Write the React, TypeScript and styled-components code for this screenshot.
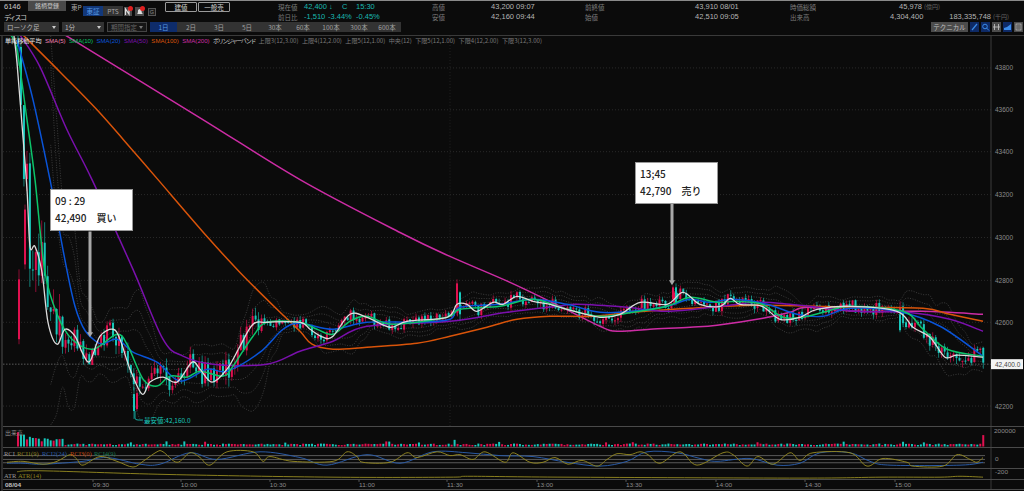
import React from "react";
import styled, { createGlobalStyle } from "styled-components";

type Pt = [number, number];

const GlobalStyle = createGlobalStyle`
    html, body { margin: 0; padding: 0; background: #0b0b0b; }
    body { font-family: "Noto Sans CJK JP", "Liberation Sans", sans-serif; }
`;

const C = {
    sma5: "#dcdcdc",
    sma10: "#0cc46a",
    sma20: "#0a54d8",
    sma50: "#7a10ac",
    sma100: "#d9540a",
    sma200: "#cc2ca4",
    up: "#e0104f",
    down: "#18c8bc",
    gold: "#8f8420",
    rciBlue: "#2a5ca8",
};

// hand-read from the chart, in page pixels
const SMA5: Pt[] = [[14, 36], [17, 63], [22, 125], [27, 190], [30, 247], [35, 247], [42, 273], [48, 323], [57, 345], [65, 330], [75, 337], [83, 355], [90, 362], [100, 337], [113, 330], [120, 340], [130, 370], [142, 395], [150, 383], [163, 378], [177, 383], [192, 363], [200, 370], [212, 383], [227, 370], [240, 347], [253, 325], [267, 323], [300, 323], [310, 330], [323, 338], [333, 337], [350, 315], [367, 318], [390, 328], [407, 322], [447, 318], [457, 305], [467, 305], [477, 312], [493, 303], [503, 305], [517, 297], [533, 302], [550, 305], [567, 310], [600, 318], [620, 315], [640, 303], [667, 305], [683, 293], [700, 305], [720, 307], [730, 299], [740, 305], [762, 307], [780, 320], [800, 318], [817, 310], [850, 307], [897, 312], [913, 328], [930, 338], [945, 358], [957, 356], [983, 358]];
const SMA10: Pt[] = [[10, 34], [17, 50], [27, 120], [35, 180], [45, 273], [58, 317], [72, 340], [93, 350], [117, 335], [128, 347], [143, 380], [157, 387], [170, 377], [187, 378], [200, 372], [223, 377], [233, 367], [253, 337], [267, 323], [300, 323], [317, 330], [333, 335], [350, 322], [367, 317], [393, 325], [447, 318], [460, 310], [500, 307], [533, 300], [567, 310], [600, 317], [633, 313], [667, 307], [690, 298], [717, 303], [737, 302], [762, 305], [783, 318], [803, 318], [827, 312], [850, 307], [903, 312], [923, 330], [947, 350], [983, 357]];
const SMA20: Pt[] = [[17, 40], [33, 100], [50, 180], [75, 307], [97, 343], [117, 340], [133, 353], [157, 363], [180, 382], [207, 370], [227, 372], [260, 353], [283, 330], [300, 324], [333, 330], [367, 323], [417, 323], [450, 320], [460, 308], [500, 305], [533, 300], [567, 305], [600, 313], [633, 312], [667, 307], [690, 300], [710, 303], [733, 300], [767, 305], [797, 315], [823, 317], [850, 309], [897, 312], [940, 327], [983, 357]];
const SMA50: Pt[] = [[20, 35], [40, 67], [67, 130], [92, 180], [133, 270], [163, 340], [183, 357], [213, 365], [267, 365], [300, 352], [333, 342], [367, 327], [450, 322], [507, 313], [557, 307], [577, 305], [627, 308], [667, 312], [720, 307], [757, 303], [790, 305], [857, 312], [907, 313], [950, 320], [983, 332]];
const SMA100: Pt[] = [[23, 35], [60, 72], [97, 110], [133, 151], [158, 180], [207, 237], [240, 273], [277, 310], [300, 332], [312, 345], [333, 350], [367, 348], [417, 344], [450, 337], [487, 328], [517, 320], [550, 317], [593, 317], [633, 313], [690, 309], [757, 306], [857, 308], [923, 309], [950, 315], [983, 322]];
const SMA200: Pt[] = [[65, 35], [200, 118], [300, 180], [400, 233], [450, 257], [510, 283], [560, 307], [600, 327], [617, 332], [650, 330], [690, 328], [717, 326], [763, 319], [790, 313], [807, 308], [857, 312], [923, 312], [983, 315]];

const RCI_GOLD: Pt[] = [[7, 463], [23, 462], [43, 465], [57, 462], [70, 455], [77, 460], [83, 466], [100, 457], [117, 462], [133, 468], [143, 462], [157, 452], [163, 452], [177, 463], [190, 453], [200, 458], [210, 466], [227, 452], [253, 452], [263, 462], [270, 457], [293, 462], [333, 462], [347, 452], [357, 457], [363, 463], [390, 463], [407, 453], [417, 458], [437, 452], [450, 456], [460, 455], [473, 460], [485, 452], [505, 463], [513, 453], [530, 463], [543, 463], [555, 458], [568, 465], [582, 461], [597, 467], [607, 460], [617, 454], [630, 455], [640, 452], [648, 455], [660, 464], [680, 452], [697, 466], [723, 453], [733, 455], [747, 467], [758, 457], [773, 465], [790, 453], [800, 461], [813, 453], [850, 453], [867, 467], [883, 459], [907, 463], [913, 467], [943, 467], [957, 455], [970, 460], [977, 463], [983, 458]];
const RCI_BLUE: Pt[] = [[7, 464], [23, 464], [43, 465], [83, 462], [107, 458], [140, 465], [160, 465], [190, 453], [217, 460], [260, 452], [300, 458], [327, 466], [367, 455], [400, 464], [433, 452], [467, 453], [500, 456], [533, 457], [567, 463], [600, 467], [627, 462], [647, 452], [677, 453], [700, 459], [717, 462], [750, 459], [777, 466], [800, 464], [820, 453], [850, 453], [870, 462], [890, 466], [960, 466], [983, 463]];
const ATR_LINE: Pt[] = [[17, 472], [43, 471], [167, 475], [333, 478], [450, 478], [470, 477], [567, 478], [800, 479], [880, 478], [940, 478], [960, 477], [983, 478]];

const PRICE_TICKS: [string, number][] = [["43800", 68], ["43600", 110], ["43400", 152], ["43200", 195], ["43000", 238], ["42800", 281], ["42600", 323], ["42200", 407]];
const TIME_TICKS: [string, number][] = [["09:30", 101], ["10:00", 189], ["10:30", 278], ["11:00", 367], ["11:30", 455], ["13:00", 545], ["13:30", 634], ["14:00", 724], ["14:30", 813], ["15:00", 903]];

const STEP = 2.97;
const X0 = 18;
const COUNT = 326;

const rand = (() => {
    let s = 6146;
    return () => {
        s = (s * 16807) % 2147483647;
        return s / 2147483647;
    };
})();

const at = (line: Pt[], x: number) => {
    if (x <= line[0][0]) return line[0][1];
    for (let i = 1; i < line.length; i++) {
        if (x <= line[i][0]) {
            const [x0, y0] = line[i - 1];
            const [x1, y1] = line[i];
            return y0 + ((y1 - y0) * (x - x0)) / (x1 - x0);
        }
    }
    return line[line.length - 1][1];
};

// catmull-rom through the points, so the averages come out rounded
const smooth = (p: Pt[]) => {
    let d = `M${p[0][0]} ${p[0][1]}`;
    for (let i = 0; i < p.length - 1; i++) {
        const a = p[Math.max(i - 1, 0)];
        const b = p[i];
        const c = p[i + 1];
        const e = p[Math.min(i + 2, p.length - 1)];
        const c1 = [b[0] + (c[0] - a[0]) / 6, b[1] + (c[1] - a[1]) / 6];
        const c2 = [c[0] - (e[0] - b[0]) / 6, c[1] - (e[1] - b[1]) / 6];
        d += `C${c1[0].toFixed(1)} ${c1[1].toFixed(1)} ${c2[0].toFixed(1)} ${c2[1].toFixed(1)} ${c[0]} ${c[1]}`;
    }
    return d;
};

interface Candle {
    x: number;
    open: number;
    close: number;
    high: number;
    low: number;
}

const candles: Candle[] = [];
{
    let prev = 40;
    for (let i = 0; i < COUNT; i++) {
        const x = X0 + i * STEP;
        const amp = x < 60 ? 32 : x < 260 ? 13 : x > 900 ? 9 : 6.5;
        const close = at(SMA5, x) + (rand() - 0.5) * amp * 2;
        const open = prev + (rand() - 0.5) * 2;
        const high = Math.min(open, close) - rand() * amp * 0.7;
        const low = Math.max(open, close) + rand() * amp * 0.7;
        candles.push({ x, open, close, high, low });
        prev = close;
    }
}

const EXTRA: Candle[] = [
    { x: 19, open: 340, close: 280, high: 270, low: 345 },
    { x: 25, open: 265, close: 210, high: 205, low: 270 },
    { x: 134, open: 395, close: 412, high: 388, low: 420 },
    { x: 137, open: 410, close: 394, high: 388, low: 412 },
    { x: 457, open: 313, close: 284, high: 280, low: 316 },
    { x: 460, open: 293, close: 315, high: 292, low: 322 },
    { x: 673, open: 300, close: 288, high: 286, low: 302 },
    { x: 676, open: 288, close: 303, high: 284, low: 306 },
    { x: 900, open: 315, close: 331, high: 313, low: 333 },
];

// bollinger bands, worked out from the generated closes
const bands = (() => {
    const out: Pt[][] = [[], [], [], [], [], []];
    const ks = [-3, -2, -1, 1, 2, 3];
    for (let i = 11; i < COUNT; i += 2) {
        const w = candles.slice(i - 11, i + 1).map((c) => c.close);
        const mean = w.reduce((a, b) => a + b, 0) / 12;
        const sd = Math.sqrt(w.reduce((a, b) => a + (b - mean) ** 2, 0) / 12);
        ks.forEach((k, n) => {
            const y = Math.max(36, Math.min(426, mean + k * sd));
            out[n].push([Number(candles[i].x.toFixed(1)), Number(y.toFixed(1))]);
        });
    }
    return out;
})();

const volumes = candles.map((c, i) => {
    const base = i < 4 ? 15 - i * 2.5 : i < 16 ? 5 + rand() * 4 : 1.5 + rand() * 1.6;
    const spike = rand() > 0.96 ? 2.5 : 0;
    return { x: c.x, h: base + spike, up: c.close < c.open };
});
volumes[0].up = true;
volumes[1].up = false;
volumes[Math.round((903 - X0) / STEP)].h = 5;
volumes[Math.round((456 - X0) / STEP)].h = 7;
volumes[Math.round((983 - X0) / STEP)].h = 12;
volumes[Math.round((983 - X0) / STEP)].up = true;

const Window = styled.div`
    width: 1024px;
    height: 491px;
    overflow: hidden;
    background: #0b0b0b;
    color: #a8a8a8;
    font-size: 7px;
    line-height: 10px;
    white-space: nowrap;
    border-top: 1px solid #8a8a8a;
    box-sizing: border-box;
    display: flex;
    flex-direction: column;
`;

const Head = styled.header`
    height: 20px;
    padding-left: 4px;
    display: flex;
    align-items: flex-start;
    flex-shrink: 0;
`;

const Identity = styled.div`
    width: 67px;
    flex-shrink: 0;
    display: grid;
    grid-template-columns: 24px 38px;
    grid-auto-rows: 10px;
    padding-top: 1px;
    color: #c8c8c8;
`;

const Ticker = styled.span`
    font-family: "Liberation Sans", sans-serif;
    font-size: 7.5px;
`;

const Company = styled.span`
    grid-column: span 2;
    font-size: 7px;
    letter-spacing: -1.5px;
`;

const RegisterButton = styled.span`
    background: #4a4a4a;
    color: #c4c4c4;
    text-align: center;
    font-size: 6px;
    height: 10px;
    margin-top: -1px;
`;

const Market = styled.span`
    width: 12px;
    flex-shrink: 0;
    padding-top: 1px;
    font-size: 6.5px;
`;

const Segment = styled.div`
    display: flex;
    margin-top: 5px;
    height: 10px;
    flex-shrink: 0;
`;

const SegmentItem = styled.span<{ $on?: boolean }>`
    width: 20px;
    text-align: center;
    font-size: 6.5px;
    background: ${({ $on }) => ($on ? "#12387a" : "#333")};
    color: ${({ $on }) => ($on ? "#5a9ae0" : "#a8a8a8")};
`;

const FlagRow = styled.div`
    display: flex;
    align-items: center;
    gap: 2px;
    margin: 5px 0 0 1px;
    height: 10px;
    width: 41px;
    flex-shrink: 0;
`;

const TradeButton = styled.span`
    width: 32px;
    height: 10px;
    box-sizing: border-box;
    line-height: 8px;
    border: 1px solid #9a9a9a;
    border-radius: 1px;
    color: #d0d0d0;
    font-size: 6.5px;
    text-align: center;
    margin: 1px 1px 0 0;
    flex-shrink: 0;
`;

const QuoteGroup = styled.div<{ $cols: string; $width: number; $offset?: number }>`
    display: grid;
    width: ${({ $width }) => $width}px;
    margin-left: ${({ $offset }) => $offset || 0}px;
    grid-template-columns: ${({ $cols }) => $cols};
    grid-auto-rows: 10px;
    padding-top: 1px;
    flex-shrink: 0;
`;

const Label = styled.span`
    color: #7c7c7c;
    font-size: 6.5px;
`;

const Value = styled.span<{ $teal?: boolean; $right?: boolean; $span?: number }>`
    color: ${({ $teal }) => ($teal ? "#19b8b0" : "#b4b4b4")};
    text-align: ${({ $right }) => ($right ? "right" : "left")};
    grid-column: span ${({ $span }) => $span || 1};
    font-family: "Liberation Sans", sans-serif;
    font-size: 7.5px;
`;

const Clock = styled(Value)`
    padding-left: 2px;
`;

const Unit = styled.span`
    color: #666;
    font-size: 6px;
    padding-left: 2px;
`;

const Toolbar = styled.div`
    height: 15px;
    box-sizing: border-box;
    padding: 1px 0 0 4px;
    display: flex;
    align-items: flex-start;
    border-bottom: 1px solid #3a3a3a;
    flex-shrink: 0;
`;

const Select = styled.span<{ $width: number; $off?: boolean }>`
    width: ${({ $width }) => $width}px;
    height: 10px;
    box-sizing: border-box;
    margin-right: 3px;
    padding: 0 3px;
    display: flex;
    justify-content: space-between;
    align-items: center;
    flex-shrink: 0;
    font-size: 6.5px;
    background: ${({ $off }) => ($off ? "#161616" : "#333")};
    border: ${({ $off }) => ($off ? "1px solid #444" : "none")};
    color: ${({ $off }) => ($off ? "#666" : "#b8b8b8")};

    &::after {
        content: "";
        border: 2.5px solid transparent;
        border-top: 3px solid ${({ $off }) => ($off ? "#777" : "#ccc")};
        border-bottom: 0;
    }
`;

const Range = styled.div`
    display: flex;
    width: 251px;
    height: 10px;
    background: #333;
`;

const RangeTab = styled.span<{ $on?: boolean; $width: number }>`
    width: ${({ $width }) => $width}px;
    text-align: center;
    font-size: 6.5px;
    background: ${({ $on }) => ($on ? "#0e2c6a" : "transparent")};
    color: ${({ $on }) => ($on ? "#5a9ae0" : "#a0a0a0")};
`;

const ToolGroup = styled.div`
    margin-left: auto;
    display: flex;
    gap: 2px;
    padding-right: 1px;
`;

const TechButton = styled.span`
    width: 37px;
    height: 10px;
    background: #4c4c4c;
    color: #c0c0c0;
    font-size: 6.5px;
    text-align: center;
`;

const ToolIcon = styled.span<{ $blue?: boolean }>`
    width: 9px;
    height: 10px;
    display: flex;
    background: ${({ $blue }) => ($blue ? "#0e2a66" : "#4c4c4c")};

    svg {
        width: 9px;
        height: 10px;
    }
`;

const Chart = styled.main`
    flex: 1;
    display: flex;
    flex-direction: column;
    border-left: 2px solid #2c2c2c;
    margin-left: 1px;
    min-height: 0;
`;

const Pane = styled.section<{ $height: number }>`
    position: relative;
    height: ${({ $height }) => $height}px;
    flex-shrink: 0;
    border-bottom: 1px solid #4a4a4a;
    box-sizing: border-box;
`;

const PaneDrawing = styled.svg`
    display: block;
    width: 100%;
    height: 100%;
`;

const Legend = styled.div`
    position: absolute;
    left: 2px;
    top: 0;
    display: flex;
    gap: 3.4px;
    font-size: 6.2px;
    line-height: 10px;
`;

const LegendItem = styled.span<{ $color?: string; $sma?: boolean; $tight?: boolean }>`
    color: ${({ $color }) => $color || "#7a7a7a"};
    font-family: ${({ $sma }) => ($sma ? '"Liberation Sans", sans-serif' : "inherit")};
    font-size: 6.1px;
    letter-spacing: ${({ $tight }) => ($tight ? "-1.4px" : "0")};
`;

const Callout = styled.div<{ $left: number; $top: number }>`
    position: absolute;
    left: ${({ $left }) => $left}px;
    top: ${({ $top }) => $top}px;
    width: 83px;
    height: 42px;
    box-sizing: border-box;
    padding: 2px 4px;
    background: #fff;
    border: 1px solid #999;
    color: #222;
    font-size: 10px;
    font-weight: 500;
    line-height: 17px;
    white-space: pre;
`;

const axisText = { fill: "#8c8c8c", fontSize: 6.5, fontFamily: "'Liberation Sans', sans-serif" };
const paneLabel = { fontSize: 6.5, fontFamily: "'Liberation Serif', serif" };

const Line = ({ points, color, width = 1.5 }: { points: Pt[]; color: string; width?: number }) => (
    <path d={smooth(points)} fill="none" stroke={color} strokeWidth={width} strokeLinejoin="round" />
);

const CandleMark = ({ c }: { c: Candle }) => {
    const color = c.close < c.open ? C.up : C.down;
    const top = Math.min(c.open, c.close);
    const h = Math.max(Math.abs(c.open - c.close), 1);
    return (
        <g fill={color}>
            <rect x={c.x - 0.4} y={c.high} width={0.8} height={c.low - c.high} opacity={0.75} />
            <rect x={c.x - 1} y={top} width={2} height={h} />
        </g>
    );
};

const Arrow = ({ x, y1, y2 }: { x: number; y1: number; y2: number }) => (
    <g fill="#a8a8a8">
        <rect x={x - 1.5} y={y1} width={3} height={y2 - y1 - 4} />
        <path d={`M${x - 3} ${y2 - 5}L${x + 3} ${y2 - 5}L${x} ${y2}Z`} />
    </g>
);

const Frame = ({ top, height, children }: { top: number; height: number; children: React.ReactNode }) => (
    <PaneDrawing viewBox={`3 ${top} 1021 ${height}`} preserveAspectRatio="none">
        {children}
    </PaneDrawing>
);

const AxisLine = ({ top, height }: { top: number; height: number }) => (
    <line x1={991} x2={991} y1={top} y2={top + height} stroke="#3c3c3c" />
);

const MainPane = () => (
    <Pane $height={391}>
        <Frame top={36} height={391}>
            {PRICE_TICKS.map(([label, y]) => (
                <g key={label}>
                    <line x1={3} x2={991} y1={y} y2={y} stroke="#2a2a2a" strokeDasharray="1 2" />
                    <text x={995} y={y + 2.5} {...axisText}>
                        {label}
                    </text>
                </g>
            ))}
            <line x1={450} x2={450} y1={36} y2={427} stroke="#232323" strokeDasharray="1 2" />
            <line x1={3} x2={991} y1={365} y2={365} stroke="#5a5a5a" strokeDasharray="1.5 1.5" />
            {bands.map((b, i) => (
                <path key={i} d={smooth(b)} fill="none" stroke="#424242" strokeWidth={0.9} strokeDasharray="1 1.5" />
            ))}
            {candles.map((c, i) => (
                <CandleMark key={i} c={c} />
            ))}
            {EXTRA.map((c, i) => (
                <CandleMark key={i} c={c} />
            ))}
            <Line points={SMA200} color={C.sma200} />
            <Line points={SMA100} color={C.sma100} />
            <Line points={SMA50} color={C.sma50} />
            <Line points={SMA20} color={C.sma20} />
            <Line points={SMA10} color={C.sma10} />
            <Line points={SMA5} color={C.sma5} width={1.3} />
            <Arrow x={90} y1={232} y2={338} />
            <Arrow x={672} y1={204} y2={286} />
            <path d="M135 412V419Q135 421 138 421H143" fill="none" stroke={C.down} strokeWidth={0.8} />
            <text x={144} y={424} fill={C.down} fontSize={6.5} fontFamily="'Noto Sans CJK JP', sans-serif">
                最安値:42,160.0
            </text>
            <AxisLine top={36} height={391} />
            <rect x={991} y={360} width={32} height={10} fill="#f4f4f4" />
            <text x={995} y={367.5} {...axisText} fill="#444">
                42,400.0
            </text>
        </Frame>
        <Legend>
            <LegendItem $color="#e8e8e8">単純移動平均</LegendItem>
            <LegendItem $sma $color="#f080b0">SMA(5)</LegendItem>
            <LegendItem $sma $color={C.sma10}>SMA(10)</LegendItem>
            <LegendItem $sma $color={C.sma20}>SMA(20)</LegendItem>
            <LegendItem $sma $color={C.sma50}>SMA(50)</LegendItem>
            <LegendItem $sma $color={C.sma100}>SMA(100)</LegendItem>
            <LegendItem $sma $color={C.sma200}>SMA(200)</LegendItem>
            <LegendItem $tight $color="#c8c8c8">ボリンジャーバンド</LegendItem>
            <LegendItem>上限3(12,3.00)</LegendItem>
            <LegendItem>上限4(12,2.00)</LegendItem>
            <LegendItem>上限5(12,1.00)</LegendItem>
            <LegendItem>中央(12)</LegendItem>
            <LegendItem>下限5(12,1.00)</LegendItem>
            <LegendItem>下限4(12,2.00)</LegendItem>
            <LegendItem>下限3(12,3.00)</LegendItem>
        </Legend>
        <Callout $left={47} $top={153}>
            {"09 : 29\n42,490　買い"}
        </Callout>
        <Callout $left={632} $top={126}>
            {"13;45\n42,790　売り"}
        </Callout>
    </Pane>
);

const VolumePane = () => (
    <Pane $height={21}>
        <Frame top={427} height={21}>
            {volumes.map((v, i) => (
                <rect key={i} x={v.x - 1} y={447.5 - v.h} width={2} height={v.h} fill={v.up ? C.up : C.down} />
            ))}
            <AxisLine top={427} height={21} />
            <text x={994} y={433.5} {...axisText}>
                200000
            </text>
            <text x={5} y={435} fill="#8c8c8c" fontSize={6} fontFamily="'Noto Sans CJK JP', sans-serif">
                出来高
            </text>
        </Frame>
    </Pane>
);

const RciPane = () => (
    <Pane $height={21}>
        <Frame top={448} height={21}>
            {[456, 460, 463.5].map((y) => (
                <line key={y} x1={3} x2={985} y1={y} y2={y} stroke="#5c5c5c" />
            ))}
            <Line points={RCI_BLUE} color={C.rciBlue} width={1} />
            <Line points={RCI_GOLD} color={C.gold} width={1} />
            <AxisLine top={448} height={21} />
            <text x={995} y={462} {...axisText}>
                0
            </text>
            <g {...paneLabel}>
                <text x={4} y={456} fill="#9a9a9a">RCI</text>
                <text x={17} y={456} fill={C.gold}>RCI1(9)</text>
                <text x={42} y={456} fill={C.rciBlue}>RCI2(24)</text>
                <text x={70} y={456} fill="#c04a10">RCI3(0)</text>
                <text x={94} y={456} fill="#1a7a50">RCI4(9)</text>
            </g>
        </Frame>
    </Pane>
);

const AtrPane = () => (
    <Pane $height={11}>
        <Frame top={469} height={11}>
            <Line points={ATR_LINE} color={C.gold} width={1} />
            <AxisLine top={469} height={11} />
            <text x={995} y={475} {...axisText}>
                -200
            </text>
            <g {...paneLabel}>
                <text x={4} y={479} fill="#9a9a9a">ATR</text>
                <text x={18} y={479} fill={C.gold}>ATR(14)</text>
            </g>
        </Frame>
    </Pane>
);

const TimePane = () => (
    <Pane $height={10}>
        <Frame top={480} height={10}>
            {TIME_TICKS.map(([label, x]) => (
                <g key={label}>
                    <line x1={x - 8} x2={x - 8} y1={480} y2={482} stroke="#666" />
                    <text x={x} y={488} textAnchor="middle" {...axisText}>
                        {label}
                    </text>
                </g>
            ))}
            <text x={5} y={488} {...axisText} fill="#c0c0c0" fontWeight="bold">
                08/04
            </text>
            <AxisLine top={480} height={10} />
        </Frame>
    </Pane>
);

const AlertFlags = () => (
    <FlagRow>
        <svg width="9" height="10" viewBox="0 0 9 10">
            <rect y="1" width="8" height="9" fill="#4a4a4a" />
            <path d="M1.5 9V3L5 8V3" fill="none" stroke="#ddd" strokeWidth="1.2" />
            <circle cx="6.5" cy="2.5" r="2.5" fill="#e02020" />
        </svg>
        <svg width="11" height="10" viewBox="0 0 11 10">
            <rect y="1" width="9" height="9" fill="#4a4a4a" />
            <path d="M2 8C3 8 3 5 3 4.5S4 3 5 3 6.5 3.5 6.5 4.5 7 8 8 8Z" fill="#ddd" />
            <circle cx="7.5" cy="2.5" r="2.5" fill="#e02020" />
        </svg>
        <svg width="9" height="9" viewBox="0 0 9 9">
            <rect x="0.5" y="1.5" width="7" height="7" fill="#1c1c1c" stroke="#555" />
            <text x="4" y="7.2" fontSize="5.5" textAnchor="middle" fill="#888" fontFamily="'Liberation Sans', sans-serif">
                G
            </text>
        </svg>
    </FlagRow>
);

export default function App() {
    return (
        <>
            <GlobalStyle />
            <Window>
                <Head>
                    <Identity>
                        <Ticker>6146</Ticker>
                        <RegisterButton>銘柄登録</RegisterButton>
                        <Company>ディスコ</Company>
                    </Identity>
                    <Market>東P</Market>
                    <Segment>
                        <SegmentItem $on>東証</SegmentItem>
                        <SegmentItem>PTS</SegmentItem>
                    </Segment>
                    <AlertFlags />
                    <TradeButton>建値</TradeButton>
                    <TradeButton>一般売</TradeButton>
                    <QuoteGroup $width={154} $offset={47} $cols="26px 24px 14px 14px 22px">
                        <Label>現在値</Label>
                        <Value $teal $span={2}>42,400 ↓</Value>
                        <Value $teal>C</Value>
                        <Value $teal>15:30</Value>
                        <Label>前日比</Label>
                        <Value $teal>-1,510</Value>
                        <Value $teal $span={2}>-3.44%</Value>
                        <Value $teal>-0.45%</Value>
                    </QuoteGroup>
                    <QuoteGroup $width={153} $cols="58px 24px 24px">
                        <Label>高値</Label>
                        <Value $right>43,200</Value>
                        <Clock>09:07</Clock>
                        <Label>安値</Label>
                        <Value $right>42,160</Value>
                        <Clock>09:44</Clock>
                    </QuoteGroup>
                    <QuoteGroup $width={205} $cols="109px 24px 24px">
                        <Label>前終値</Label>
                        <Value $right>43,910</Value>
                        <Clock>08/01</Clock>
                        <Label>始値</Label>
                        <Value $right>42,510</Value>
                        <Clock>09:05</Clock>
                    </QuoteGroup>
                    <QuoteGroup $width={230} $cols="100px 32px 69px 20px">
                        <Label>時価総額</Label>
                        <Value $right>45,978</Value>
                        <Unit>(億円)</Unit>
                        <span />
                        <Label>出来高</Label>
                        <Value $right>4,304,400</Value>
                        <Value $right>183,335,748</Value>
                        <Unit>(千円)</Unit>
                    </QuoteGroup>
                </Head>
                <Toolbar>
                    <Select $width={55}>ローソク足</Select>
                    <Select $width={42}>1分</Select>
                    <Select $width={40} $off>
                        期間指定
                    </Select>
                    <Range>
                        <RangeTab $on $width={27}>1日</RangeTab>
                        <RangeTab $width={28}>2日</RangeTab>
                        <RangeTab $width={28}>3日</RangeTab>
                        <RangeTab $width={28}>5日</RangeTab>
                        <RangeTab $width={28}>30本</RangeTab>
                        <RangeTab $width={28}>60本</RangeTab>
                        <RangeTab $width={28}>100本</RangeTab>
                        <RangeTab $width={28}>300本</RangeTab>
                        <RangeTab $width={28}>600本</RangeTab>
                    </Range>
                    <ToolGroup>
                        <TechButton>テクニカル</TechButton>
                        <ToolIcon $blue>
                            <svg viewBox="0 0 9 10">
                                <path d="M2 8L7 2" stroke="#3a8ae8" strokeWidth="1.2" />
                            </svg>
                        </ToolIcon>
                        <ToolIcon $blue>
                            <svg viewBox="0 0 9 10">
                                <circle cx="4" cy="4.5" r="2.3" fill="none" stroke="#3a8ae8" />
                                <path d="M5.5 6L8 8.5" stroke="#3a8ae8" />
                            </svg>
                        </ToolIcon>
                        <ToolIcon>
                            <svg viewBox="0 0 9 10">
                                <path d="M2.5 2V8M6.5 2V8M1 5H8" stroke="#bbb" strokeWidth="0.9" />
                            </svg>
                        </ToolIcon>
                        <ToolIcon $blue>
                            <svg viewBox="0 0 9 10">
                                <path d="M1 8V6L4 5L8 2V8Z" fill="#3a8ae8" />
                            </svg>
                        </ToolIcon>
                        <ToolIcon>
                            <svg viewBox="0 0 9 10">
                                <rect x="2" y="2" width="5" height="6" fill="none" stroke="#bbb" strokeWidth="0.8" />
                                <path d="M3 4H6M3 6H6" stroke="#bbb" strokeWidth="0.6" />
                            </svg>
                        </ToolIcon>
                    </ToolGroup>
                </Toolbar>
                <Chart>
                    <MainPane />
                    <VolumePane />
                    <RciPane />
                    <AtrPane />
                    <TimePane />
                </Chart>
            </Window>
        </>
    );
}
